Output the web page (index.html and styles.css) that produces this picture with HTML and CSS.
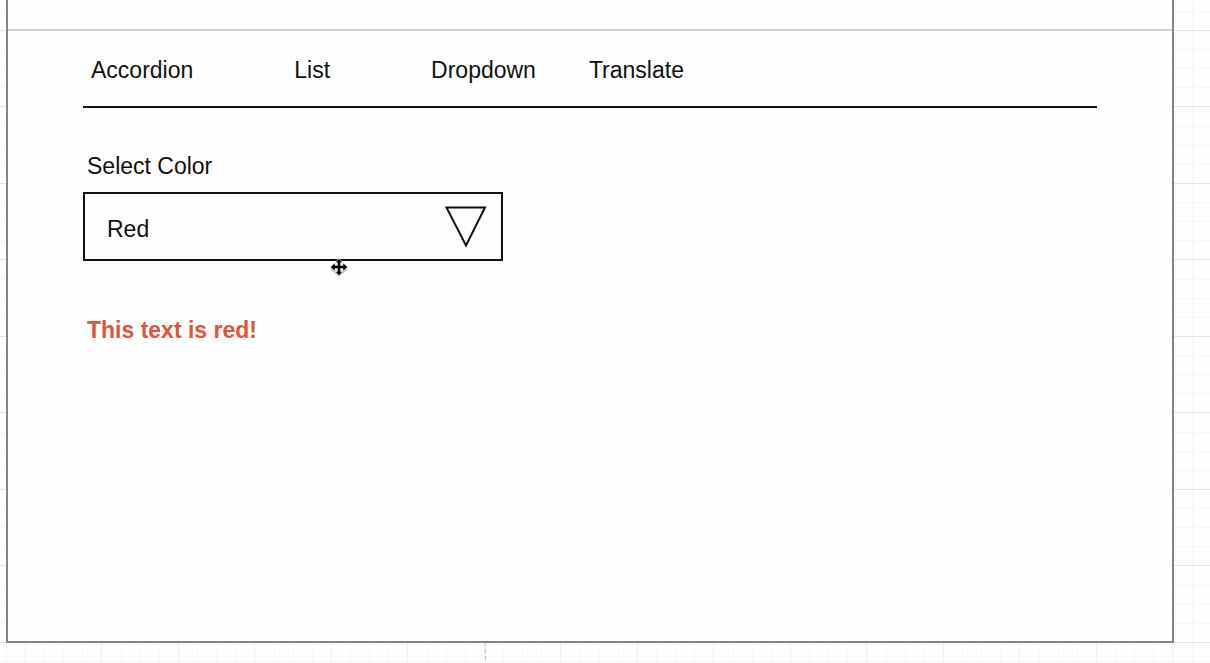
FILE: index.html
```
<!DOCTYPE html>
<html lang="en">
<head>
<meta charset="utf-8">
<meta name="viewport" content="width=device-width, initial-scale=1">
<title>Dropdown wireframe</title>
<link rel="stylesheet" href="styles.css">
</head>
<body>
<svg class="grid" aria-hidden="true">
  <defs>
    <pattern id="cells" x="25" y="30" width="153" height="153" patternUnits="userSpaceOnUse">
      <path class="minor" d="M19.5 0V153M38.5 0V153M57.5 0V153M96.5 0V153M115.5 0V153M134.5 0V153M0 19.5H153M0 38.5H153M0 57.5H153M0 96.5H153M0 115.5H153M0 134.5H153"/>
      <path class="column" d="M.5 0V153M76.5 0V153"/>
      <path class="row" d="M0 .5H153M0 76.5H153"/>
    </pattern>
  </defs>
  <rect width="100%" height="100%" fill="url(#cells)"/>
  <path class="page-break" d="M485.5 642V2000"/>
</svg>
<div class="frame">
  <div class="titlebar"></div>
  <main class="content">
    <nav class="tabs">
      <a class="tab tab-wide" href="#accordion">Accordion</a>
      <a class="tab tab-wide" href="#list">List</a>
      <a class="tab tab-near" href="#dropdown">Dropdown</a>
      <a class="tab" href="#translate">Translate</a>
    </nav>
    <label class="label" for="color">Select Color</label>
    <div class="picker">
      <select class="select" id="color">
        <option>Red</option>
      </select>
      <svg class="arrow" viewBox="0 0 42 42" aria-hidden="true"><path d="M1.5 1.5H40L21 39.5Z"/></svg>
      <svg class="cursor" viewBox="0 0 20 20" aria-hidden="true">
        <path class="cursor-shadow" d="M10 3L19 11L10 19L1 11Z"/>
        <path class="cursor-halo" d="M10 0L18 8.500L10 17L2 8.500Z"/>
        <path d="M10 1L12.500 4H11V8H14.500V6L18 9L14.500 12V10H11V14H12.500L10 17L7.500 14H9V10H5.500V12L2 9L5.500 6V8H9V4H7.500Z" stroke="#111" stroke-width=".6"/>
      </svg>
    </div>
    <p class="message">This text is red!</p>
  </main>
</div>
</body>
</html>
```
FILE: styles.css
```
* {
  box-sizing: border-box;
}

body {
  margin: 0;
  min-height: 100vh;
  display: flex;
  padding: 0 36px 20px 6px;
  background: #fefefe;
  color: #111;
  font: 23px/28px "Liberation Sans", Arial, sans-serif;
  overflow: hidden;
}

/* Canvas grid behind the frame */
.grid {
  position: absolute;
  inset: 0;
  width: 100%;
  height: 100%;
  z-index: -1;
  fill: none;
}

.minor {
  stroke: #f7f7f7;
}

.column {
  stroke: #f0f0f0;
}

.row {
  stroke: #e4e4e4;
}

.page-break {
  stroke: #c4c4c4;
  stroke-dasharray: 4 3;
}

.frame {
  flex: 1;
  border: solid #858585;
  border-width: 0 2px 2px;
  background: #fefefe;
}

.titlebar {
  height: 31px;
  border-bottom: 2px solid #d0d0d0;
}

.content {
  padding: 0 75px;
}

.tabs {
  display: flex;
  padding: 25px 8px 22px;
  border-bottom: 2px solid #111;
}

.tab {
  color: inherit;
  text-decoration: none;
}

.tab-wide {
  margin-right: 101px;
}

.tab-near {
  margin-right: 53px;
}

.label {
  display: block;
  margin: 44px 0 12px 4px;
}

.picker {
  position: relative;
  max-width: 420px;
}

.select {
  display: block;
  width: 100%;
  height: 69px;
  padding: 4px 60px 0 22px;
  border: 2px solid #111;
  border-radius: 0;
  background: transparent;
  color: inherit;
  font: inherit;
  appearance: none;
}

.arrow {
  position: absolute;
  top: 14px;
  right: 16px;
  width: 42px;
  height: 42px;
  fill: none;
  stroke: #111;
  stroke-width: 2;
  pointer-events: none;
}

.cursor {
  position: absolute;
  top: 66px;
  left: 246px;
  width: 20px;
  height: 20px;
  pointer-events: none;
}

.cursor-shadow {
  fill: #cacaca;
}

.cursor-halo {
  fill: #e8e8e8;
}

.message {
  margin: 55px 0 0 4px;
  color: #dd5639;
  font-weight: bold;
}
```
